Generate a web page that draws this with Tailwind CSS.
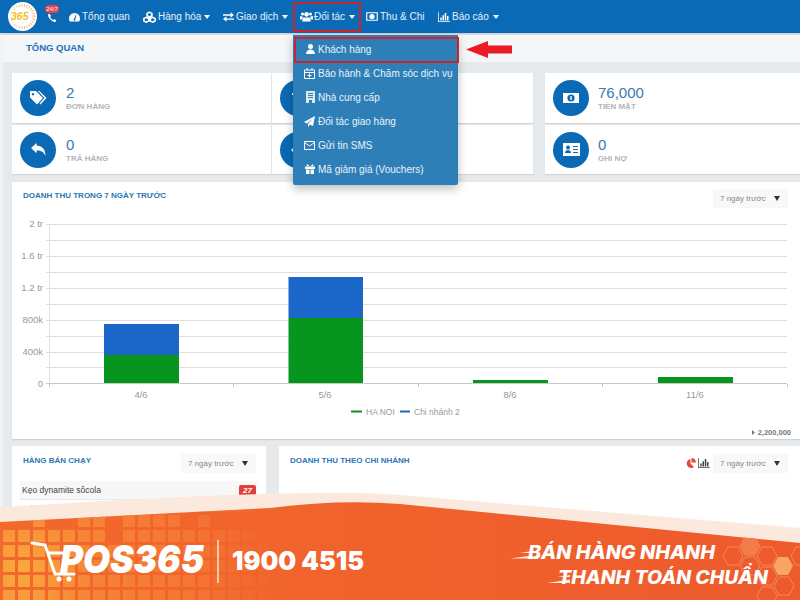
<!DOCTYPE html>
<html lang="vi">
<head>
  <meta charset="UTF-8">
  <title>POS365 - Tổng quan</title>
  <script src="https://cdn.jsdelivr.net/npm/@tailwindcss/browser@4"></script>
</head>
<body class="bg-[#e6eaed] font-['Liberation_Sans',sans-serif]">
<div class="relative w-[800px] h-[600px] overflow-hidden">

  <!-- Thanh menu -->
  <nav class="h-[33px] bg-[#0a6ab5] flex items-center text-[10px] text-white/90 shadow-[0_1px_2px_rgba(0,0,0,.15)]">
    <svg class="ml-2 w-[29px] h-[29px] shrink-0" viewBox="0 0 29 29">
      <circle cx="14.5" cy="14.5" r="14.5" fill="#fff"/>
      <circle cx="15" cy="14.5" r="11" fill="none" stroke="#f4a04a" stroke-width="3" stroke-dasharray="1 1.5" opacity=".7"/>
      <circle cx="13" cy="14.5" r="10" fill="#fff"/>
      <text x="3" y="18" font-size="10.500" font-weight="700" font-style="italic" fill="#f5bd24">365</text>
    </svg>
    <div class="relative w-[32px] h-full shrink-0">
      <span class="absolute left-[8px] top-[5px] w-[14px] h-[8px] rounded-full bg-[#e0454a] text-[6px] leading-[8px] text-center">24/7</span>
      <svg class="absolute left-[10px] top-[13px] w-[10px] h-[10px]" viewBox="0 0 16 16" fill="#fff"><path d="M4 1 1.500 2.500C1 7 8 15 13.500 14.500L15 12 11.500 9.500 10 11C8 10.500 5.500 8 5 6L6.500 4.500Z"/></svg>
    </div>
    <div class="w-[74px] flex items-center gap-[2px] shrink-0">
      <svg class="w-[11px] h-[10px]" viewBox="0 0 16 14" fill="#fff"><path d="M8 1a8 8 0 0 0-8 8c0 2 .6 3.500 1.500 4.500h13C15.400 12.500 16 11 16 9a8 8 0 0 0-8-8Zm-.7 9 2.500-6 .8.300-1.500 6.200a1.300 1.300 0 1 1-1.800-.5Z"/></svg>
      <span>Tổng quan</span>
    </div>
    <div class="w-[80px] flex items-center gap-[2px] shrink-0">
      <svg class="w-[13px] h-[12px]" viewBox="0 0 16 15" fill="none" stroke="#fff" stroke-width="2"><path d="M8 1.500 11 3v3L8 7.500 5 6V3ZM4 8 7 9.500v3L4 14 1 12.500v-3ZM12 8l3 1.500v3L12 14l-3-1.500v-3Z"/></svg>
      <span>Hàng hóa</span>
      <i class="ml-[1px] border-x-[3px] border-x-transparent border-t-[4px] border-t-white"></i>
    </div>
    <div class="w-[77px] flex items-center gap-[2px] shrink-0">
      <svg class="w-[11px] h-[10px]" viewBox="0 0 16 14" fill="#fff"><path d="M0 3h11V0l5 4-5 4V5H0ZM16 9H5V6L0 10l5 4v-3h11Z"/></svg>
      <span>Giao dịch</span>
      <i class="ml-[2px] border-x-[3px] border-x-transparent border-t-[4px] border-t-white"></i>
    </div>
    <div class="w-[66px] flex items-center gap-[1px] shrink-0">
      <svg class="w-[13px] h-[11px]" viewBox="0 0 18 14" fill="#fff"><circle cx="9" cy="4" r="3.200"/><circle cx="3.500" cy="3.500" r="2.200"/><circle cx="14.500" cy="3.500" r="2.200"/><path d="M4 8.500h10l1 5.500H3ZM0 6.500h3.500L3 11H0ZM14.500 6.500H18V11h-3Z"/></svg>
      <span>Đối tác</span>
      <i class="ml-[3px] border-x-[3px] border-x-transparent border-t-[4px] border-t-white"></i>
    </div>
    <div class="w-[72px] flex items-center gap-[2px] shrink-0">
      <svg class="w-[12px] h-[9px]" viewBox="0 0 16 12"><path fill="none" stroke="#fff" stroke-width="1.500" d="M1 1h14v10H1Z"/><circle cx="8" cy="6" r="3.500" fill="#fff"/></svg>
      <span>Thu &amp; Chi</span>
    </div>
    <div class="flex items-center gap-[2px] shrink-0">
      <svg class="w-[12px] h-[10px]" viewBox="0 0 16 13" fill="#fff"><path d="M0 0h1v12h15v1H0ZM3 7h2v4H3ZM6 4h2v7H6ZM9 1h2v10H9ZM12 5h2v6h-2Z"/></svg>
      <span>Báo cáo</span>
      <i class="ml-[2px] border-x-[3px] border-x-transparent border-t-[4px] border-t-white"></i>
    </div>
  </nav>

  <!-- Nội dung -->
  <div class="h-[567px] border-l-[3px] border-l-[#f1f3f5]">
    <div class="mt-[2px] h-[27px] bg-[#f4f6f8] pl-[23px] flex items-center text-[9.500px] font-bold text-[#1f73b7]">TỔNG QUAN</div>

    <div class="pl-[9px] pt-[11px]">
      <!-- Thẻ số liệu -->
      <div class="flex gap-3">
        <div class="w-[521px] grid grid-cols-[259px_261px] grid-rows-[50px_49px] gap-[1px] gap-y-[2px] shrink-0">
          <div class="bg-white pl-2 flex items-center gap-[10px] shadow-[0_1px_1px_rgba(0,0,0,.08)]">
            <span class="w-9 h-9 rounded-full bg-[#0a6ab5] flex items-center justify-center">
              <svg class="w-[17px] h-[15px]" viewBox="0 0 17 15" fill="#fff"><path d="M0 0h6l7 7-6 6.500L0 6.500Zm3 2a1.200 1.200 0 1 0 .01 0Z" fill-rule="evenodd"/><path d="M8 0h1.500l7 7-6 6.500-1-1 5-5.500Z"/></svg>
            </span>
            <div><p class="text-[15px] leading-[17px] text-[#3a79b7]">2</p><p class="text-[8px] leading-[11px] font-bold text-[#b0b5ba]">ĐƠN HÀNG</p></div>
          </div>
          <div class="bg-white pl-2 flex items-center shadow-[0_1px_1px_rgba(0,0,0,.08)]">
            <span class="w-9 h-9 rounded-full bg-[#0a6ab5] flex items-center justify-center"><svg class="w-[12px] h-[10px]" viewBox="0 0 12 10" fill="#fff"><path d="M0 0h12v2H7v8H5V2H0Z"/></svg></span>
          </div>
          <div class="bg-white pl-2 flex items-center gap-[10px] shadow-[0_1px_1px_rgba(0,0,0,.08)]">
            <span class="w-9 h-9 rounded-full bg-[#0a6ab5] flex items-center justify-center">
              <svg class="w-[15px] h-[13px]" viewBox="0 0 16 14" fill="#fff"><path d="M0 5.500 6 0v3c5 0 9.500 2.500 9.500 11C14 9.500 11 8 6 8v3Z"/></svg>
            </span>
            <div><p class="text-[15px] leading-[17px] text-[#3a79b7]">0</p><p class="text-[8px] leading-[11px] font-bold text-[#b0b5ba]">TRẢ HÀNG</p></div>
          </div>
          <div class="bg-white pl-2 flex items-center shadow-[0_1px_1px_rgba(0,0,0,.08)]">
            <span class="w-9 h-9 rounded-full bg-[#0a6ab5] flex items-center justify-center"><svg class="w-[14px] h-[10px]" viewBox="0 0 14 10" fill="#fff"><path d="M0 5 5 0v3h9v4H5v3Z"/></svg></span>
          </div>
        </div>
        <div class="flex-1 grid grid-rows-[50px_49px] gap-y-[2px]">
          <div class="bg-white pl-2 flex items-center gap-[9px] shadow-[0_1px_1px_rgba(0,0,0,.08)]">
            <span class="w-9 h-9 rounded-full bg-[#0a6ab5] flex items-center justify-center">
              <svg class="w-[16px] h-[10px]" viewBox="0 0 16 10"><path fill="#fff" d="M0 0h16v10H0Z"/><circle cx="8" cy="5" r="3.600" fill="#0a6ab5"/><path fill="#fff" d="M7.300 3h1.400v4H7.300Z"/></svg>
            </span>
            <div><p class="text-[15px] leading-[17px] text-[#3a79b7]">76,000</p><p class="text-[8px] leading-[11px] font-bold text-[#b0b5ba]">TIỀN MẶT</p></div>
          </div>
          <div class="bg-white pl-2 flex items-center gap-[9px] shadow-[0_1px_1px_rgba(0,0,0,.08)]">
            <span class="w-9 h-9 rounded-full bg-[#0a6ab5] flex items-center justify-center">
              <svg class="w-[17px] h-[13px]" viewBox="0 0 17 13"><path fill="#fff" d="M0 0h17v13H0Z"/><circle cx="5" cy="4.500" r="2" fill="#0a6ab5"/><path fill="#0a6ab5" d="M2 10c0-4 6-4 6 0ZM10 3h5v1h-5ZM10 6h5v1h-5ZM10 9h5v1h-5Z"/></svg>
            </span>
            <div><p class="text-[15px] leading-[17px] text-[#3a79b7]">0</p><p class="text-[8px] leading-[11px] font-bold text-[#b0b5ba]">GHI NỢ</p></div>
          </div>
        </div>
      </div>

      <!-- Biểu đồ doanh thu -->
      <div class="mt-2 h-[257px] bg-white shadow-[0_1px_1px_rgba(0,0,0,.1)]">
        <div class="h-[28px] pl-[11px] pr-3 pt-[7px] flex justify-between items-start">
          <span class="text-[8px] leading-[14px] font-bold text-[#2a77b5]">DOANH THU TRONG 7 NGÀY TRƯỚC</span>
          <div class="w-[75px] h-[19px] bg-[#f8f8f8] pl-[7px] pr-2 flex items-center justify-between text-[8px] text-[#888]"><span>7 ngày trước</span><i class="border-x-[3px] border-x-transparent border-t-[5px] border-t-[#333]"></i></div>
        </div>
        <svg class="block w-[788px] h-[229px]" viewBox="12 210 788 229">
          <g stroke="#dedede" stroke-width="1">
            <path d="M46 224.500H787M46 240.500H787M46 256.500H787M46 272.500H787M46 288.500H787M46 304.500H787M46 320.500H787M46 336.500H787M46 352.500H787M46 367.500H787"/>
            <path d="M49.500 224V384"/>
          </g>
          <path stroke="#c8c8c8" d="M46 383.500H787M49.500 384v3M233.500 384v3M418.500 384v3M602.500 384v3M787.500 384v3"/>
          <path fill="#1a67c9" d="M104 324h75v31h-75ZM288.500 277H363v41h-74.500Z"/>
          <path fill="#07951d" d="M104 355h75v28h-75ZM288.500 318H363v65h-74.500ZM473 380h75v3h-75ZM658 377h75v6h-75Z"/>
          <g font-size="9.500" fill="#999" text-anchor="end">
            <text x="43" y="227">2 tr</text><text x="43" y="259">1.6 tr</text><text x="43" y="291">1.2 tr</text><text x="43" y="323">800k</text><text x="43" y="355">400k</text><text x="43" y="387">0</text>
          </g>
          <g font-size="9.500" fill="#999" text-anchor="middle">
            <text x="141" y="398">4/6</text><text x="325" y="398">5/6</text><text x="510" y="398">8/6</text><text x="695" y="398">11/6</text>
          </g>
          <path d="M351 411.500h11" stroke="#07951d" stroke-width="2"/>
          <text x="366" y="415" font-size="8.500" fill="#999">HA NOI</text>
          <path d="M400 411.500h10" stroke="#1a67c9" stroke-width="2"/>
          <text x="414" y="415" font-size="8.500" fill="#999">Chi nhánh 2</text>
          <path d="M752 430v5l3-2.500Z" fill="#777"/>
          <text x="791" y="435" font-size="7.500" font-weight="700" fill="#777" text-anchor="end">2,200,000</text>
        </svg>
      </div>

      <!-- Hàng bán chạy + chi nhánh -->
      <div class="mt-[7px] flex gap-[13px]">
        <div class="w-[254px] h-[120px] bg-white shrink-0 pt-2">
          <div class="h-[27px] pl-[11px] pr-[10px] flex justify-between items-start">
            <span class="text-[8px] leading-[14px] font-bold text-[#2a77b5]">HÀNG BÁN CHẠY</span>
            <div class="w-[75px] h-[19px] bg-[#f8f8f8] pl-[7px] pr-2 flex items-center justify-between text-[8px] text-[#888]"><span>7 ngày trước</span><i class="border-x-[3px] border-x-transparent border-t-[5px] border-t-[#333]"></i></div>
          </div>
          <div class="mx-2 h-[19px] bg-[#f7f7f7] border-b border-b-[#e8e8e8] px-[2px] flex justify-between items-center text-[8.500px] text-[#444]"><span>Kẹo dynamite sôcola</span><span class="w-[17px] h-[11px] rounded-[2px] bg-[#e2403c] text-white text-[8px] font-bold italic leading-[11px] text-center">27</span></div>
          <div class="mx-2 h-[19px] pl-[2px] flex items-center text-[8.500px] text-[#444]"><span>Trà đào</span></div>
        </div>
        <div class="flex-1 h-[120px] bg-white pt-2 pl-[11px] pr-3 flex justify-between items-start">
          <span class="text-[8px] leading-[14px] font-bold text-[#2a77b5]">DOANH THU THEO CHI NHÁNH</span>
          <div class="flex items-start gap-[2px]">
            <svg class="w-[10px] h-[10px] mt-1" viewBox="0 0 10 10" fill="#e4473c"><path d="M4.500 1v4.500L8 9A4.500 4.500 0 1 1 4.500 1ZM5.500 0A4.500 4.500 0 0 1 10 4.500H5.500Z"/></svg>
            <svg class="w-[12px] h-[10px] mt-1 mr-[1px]" viewBox="0 0 16 13" fill="#444"><path d="M0 0h1v12h15v1H0ZM3 7h2v4H3ZM6 4h2v7H6ZM9 1h2v10H9ZM12 5h2v6h-2Z"/></svg>
            <div class="w-[75px] h-[19px] bg-[#f8f8f8] pl-[7px] pr-2 flex items-center justify-between text-[8px] text-[#888]"><span>7 ngày trước</span><i class="border-x-[3px] border-x-transparent border-t-[5px] border-t-[#333]"></i></div>
          </div>
        </div>
      </div>
    </div>
  </div>

  <!-- Menu Đối tác -->
  <div class="absolute left-[293px] top-[35px] w-[165px] h-[150px] bg-[#2e7eb8] rounded-b-[2px] shadow-[0_4px_10px_rgba(0,0,0,.25)] pt-[2px] text-[10px] text-white/90">
    <div class="h-6 flex items-center"><span class="w-[25px] pr-[3px] flex justify-end"><svg class="w-[9px] h-[10px]" viewBox="0 0 9 10" fill="#fff"><circle cx="4.500" cy="2.500" r="2.500"/><path d="M0 10c0-6 9-6 9 0Z"/></svg></span>Khách hàng</div>
    <div class="h-6 flex items-center"><span class="w-[25px] pr-[3px] flex justify-end"><svg class="w-[11px] h-[11px]" viewBox="0 0 11 11" fill="none" stroke="#fff"><path d="M.5 2h10v8.500H.5ZM.5 4.500h10M3 0v2M8 0v2M5.500 5.500v4M3.500 7.500h4"/></svg></span>Bảo hành &amp; Chăm sóc dịch vụ</div>
    <div class="h-6 flex items-center"><span class="w-[25px] pr-[3px] flex justify-end"><svg class="w-[9px] h-[12px]" viewBox="0 0 9 12"><path fill="#dbe8f2" d="M0 0h9v12H0Z"/><path fill="#2e7eb8" d="M2 2h5v1H2ZM2 4h5v1H2ZM2 6h5v1H2ZM3 9h3v3H3Z"/></svg></span>Nhà cung cấp</div>
    <div class="h-6 flex items-center"><span class="w-[25px] pr-[3px] flex justify-end"><svg class="w-[11px] h-[11px]" viewBox="0 0 11 11" fill="#fff"><path d="M11 0 9 10 6 8.500 4 11V8l5-5.500L3 7.500 0 6Z"/></svg></span>Đối tác giao hàng</div>
    <div class="h-6 flex items-center"><span class="w-[25px] pr-[3px] flex justify-end"><svg class="w-[11px] h-[9px]" viewBox="0 0 11 9" fill="none" stroke="#fff"><path d="M.5.500h10v8H.5ZM.5 1.500 5.500 5l5-3.500"/></svg></span>Gửi tin SMS</div>
    <div class="h-6 flex items-center"><span class="w-[25px] pr-[3px] flex justify-end"><svg class="w-[10px] h-[10px]" viewBox="0 0 10 10" fill="#fff"><path d="M0 2.500h10v2.500H0ZM1 5.500h3.500V10H1ZM5.500 5.500H9V10H5.500ZM2 0l3 2.500L8 0l.5 2H1.500Z"/></svg></span>Mã giảm giá (Vouchers)</div>
  </div>

  <!-- Khung đỏ và mũi tên chú thích -->
  <div class="absolute left-[293px] top-[2px] w-[68px] h-[30px] border-[2px] border-[#c9252f]"></div>
  <div class="absolute left-[294px] top-[37px] w-[165px] h-[26px] border-[2px] border-[#c9252f]"></div>
  <svg class="absolute left-[466px] top-[40px] w-[46px] h-[19px]" viewBox="0 0 46 19" fill="#ec1c24"><path d="M0 9.500 22 1v4.500h24v8H22V18Z"/></svg>

  <!-- Băng rôn POS365 -->
  <svg class="absolute left-0 top-0 w-[800px] h-[600px]" viewBox="0 0 800 600">
    <defs>
      <linearGradient id="cam" gradientUnits="userSpaceOnUse" x1="0" x2="800" y1="0" y2="0"><stop offset="0" stop-color="#f2692c"/><stop offset="1" stop-color="#ee5a2c"/></linearGradient>
      <radialGradient id="sang" gradientUnits="userSpaceOnUse" cx="20" cy="570" r="250"><stop offset="0" stop-color="#fbae3f" stop-opacity=".95"/><stop offset=".3" stop-color="#f8943c" stop-opacity=".65"/><stop offset=".7" stop-color="#f8863c" stop-opacity=".5"/><stop offset="1" stop-color="#f57c38" stop-opacity=".1"/></radialGradient>
      <pattern id="o" x="3" y="515" width="15" height="15" patternUnits="userSpaceOnUse"><rect width="12" height="12" fill="#fff"/></pattern>
      <mask id="luoi" maskUnits="userSpaceOnUse" x="0" y="510" width="280" height="90">
        <rect x="0" y="510" width="280" height="90" fill="url(#o)"/>
        <!-- ô trống ở các hàng trên -->
        <path fill="#000" d="M0 513h33v14H0ZM48 513h30v14H48ZM108 513h15v14h-15ZM183 513h15v14h-15ZM213 513h67v14h-67ZM108 528h15v14h-15ZM258 528h22v14h-22Z"/>
      </mask>
      <clipPath id="nen"><path d="M0 522 270 508Q340 499 400 504L800 543V600H0Z"/></clipPath>
    </defs>
    <path fill="#fbe9dd" d="M0 507C120 500 220 493 340 493C370 493 385 494 400 495L800 528V600H0Z"/>
    <path fill="url(#cam)" d="M0 522 270 508Q340 499 400 504L800 543V600H0Z"/>
    <g clip-path="url(#nen)"><rect x="0" y="510" width="280" height="90" fill="url(#sang)" mask="url(#luoi)"/></g>
    <g fill="none" stroke="#f5875a" stroke-width="1" clip-path="url(#nen)">
      <path d="M723 556l5-9h10l5 9-5 9h-10ZM757 556l5-9h10l5 9-5 9h-10ZM740 546l5-9h10l5 9-5 9h-10ZM791 556l5-9h10l5 9-5 9h-10ZM740 566l5-9h10l5 9-5 9h-10ZM757 576l5-9h10l5 9-5 9h-10ZM774 586l5-9h10l5 9-5 9h-10ZM757 596l5-9h10l5 9-5 9h-10Z"/>
      <path fill="#f9a566" stroke="none" d="M773 566l5-9h10l5 9-5 9h-10Z"/>
      <path fill="#f27c4a" stroke="none" d="M740 546l5-9h10l5 9-5 9h-10Z"/>
    </g>
    <!-- xe đẩy -->
    <path d="M32 543 45 545 55 574H74M48 553H64" fill="none" stroke="#fff" stroke-width="3" stroke-linecap="round" stroke-linejoin="round"/>
    <circle cx="59" cy="579" r="2.500" fill="#fff"/><circle cx="69" cy="579" r="2.500" fill="#fff"/>
    <text x="60" y="573" textLength="144" lengthAdjust="spacingAndGlyphs" font-family="Inter" font-size="39" font-weight="900" font-style="italic" fill="#fff">POS365</text>
    <path d="M218 540V583" stroke="#fde3d3" stroke-width="1.500"/>
    <text x="232" y="570" textLength="132" lengthAdjust="spacingAndGlyphs" font-family="Inter" font-size="26" font-weight="900" fill="#fff">1900 4515</text>
    <!-- khẩu hiệu -->
    <path d="M510 558.500 532 555.500V558.500ZM520 553 532 551V553ZM547 583 570 579.500V583ZM557 577 570 575V577Z" fill="#fff" opacity=".85"/>
    <text x="528" y="559" textLength="187" lengthAdjust="spacingAndGlyphs" font-family="Inter" font-size="18.500" font-weight="800" font-style="italic" fill="#fff">BÁN HÀNG NHANH</text>
    <text x="558" y="584" textLength="210" lengthAdjust="spacingAndGlyphs" font-family="Inter" font-size="18.500" font-weight="800" font-style="italic" fill="#fff">THANH TOÁN CHUẨN</text>
  </svg>
</div>
</body>
</html>
